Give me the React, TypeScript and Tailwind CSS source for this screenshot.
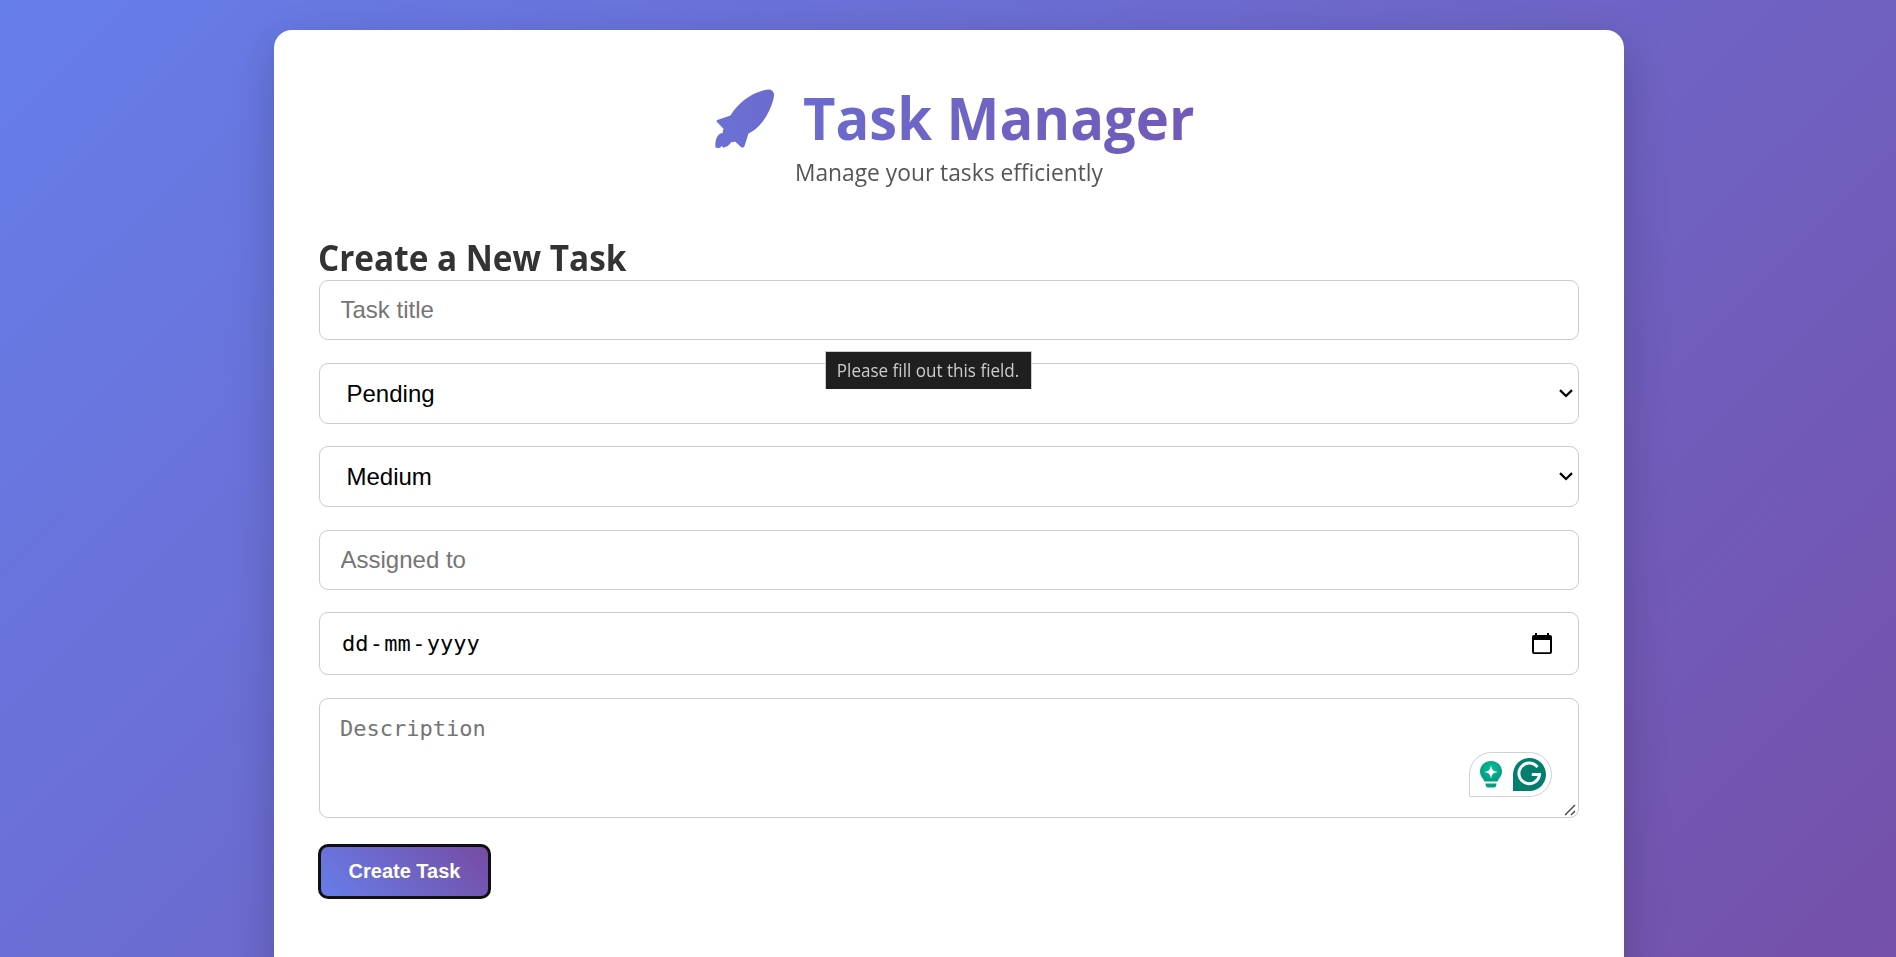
import React from "react";

const field =
  "block h-[60px] w-full rounded-[9px] border border-[#ccc] bg-white px-[20.5px] text-2xl font-['Liberation_Sans',Arial,sans-serif] outline-none placeholder:text-[#757575]";

function Chevron() {
  return (
    <svg width="14" height="9" viewBox="0 0 14 9" fill="none" stroke="#000" strokeWidth="2.3" className="mr-[5px] mb-px">
      <path d="M1 1.2 L7 7 L13 1.2" />
    </svg>
  );
}

function SelectField({ value }: { value: string }) {
  return (
    <div className="flex h-[61px] items-center justify-between rounded-[9px] border border-[#ccc] bg-white pl-[26.5px] font-['Liberation_Sans',Arial,sans-serif] text-2xl text-black">
      <span>{value}</span>
      <Chevron />
    </div>
  );
}

function Rocket() {
  return (
    <svg width="60" height="60" viewBox="0 0 60 60" className="mt-[11px] mr-[28px] shrink-0">
      <defs>
        <linearGradient id="rk" x1="0" y1="0" x2="1" y2="0">
          <stop offset="0" stopColor="#6b70d6" />
          <stop offset="1" stopColor="#6c6bce" />
        </linearGradient>
      </defs>
      <path
        fill="url(#rk)"
        d="M54 0.5 C58 0.3 60.500 3 60 7 C58.500 16 54 26 47.500 34 C43.500 39 38.500 42.500 34.500 44.500 L30.500 57 C29.700 58.700 28 59 27 58 L21 52.500 L19 53.300 L17.500 52.700 C15.500 56 12.500 58.500 8.700 58.500 L8.300 57.200 L7 57.300 L6.500 58.700 L3.500 59 L1.500 58.500 C0.800 53 2 48 5 45.500 C6.500 44.200 8 44 9.200 44 L8.500 42.500 L9.700 40 L3 33 C2.200 32 2.600 31.300 4 30.800 L16.500 26.500 C22.500 16 37 2.500 54 0.500 Z"
      />
    </svg>
  );
}

function Assistant() {
  return (
    <div className="absolute right-[26px] bottom-[20px] flex h-[45px] w-[83px] items-center justify-between rounded-r-full rounded-tl-full rounded-bl-none border border-[#ccd0e0] bg-white pr-[5px] pl-[9px]">
      <svg width="24" height="30" viewBox="0 0 24 30">
        <defs>
          <radialGradient id="bulb" cx="0.5" cy="0.4" r="0.6">
            <stop offset="0" stopColor="#00c29a" />
            <stop offset="1" stopColor="#069a80" />
          </radialGradient>
        </defs>
        <path fill="url(#bulb)" d="M12 1 C18 1 23 5.500 23 11.500 C23 16 20 18 18.500 21.500 H5.500 C4 18 1 16 1 11.500 C1 5.500 6 1 12 1 Z" />
        <path fill="#fff" d="M12 5.500 C13 10 14 11 18.500 12 C14 13 13 14 12 18.500 C11 14 10 13 5.500 12 C10 11 11 10 12 5.500 Z" />
        <path fill="#069a80" d="M6.500 23.500 H17.500 C17.500 26 16.500 27.500 15 27.500 H9 C7.500 27.500 6.500 26 6.500 23.500 Z" />
      </svg>
      <svg width="33" height="33" viewBox="0 0 33 33">
        <path fill="#027e6f" d="M16.500 0 A16.500 16.500 0 0 1 16.500 33 H0 V16.500 A16.500 16.500 0 0 1 16.500 0 Z" />
        <path fill="none" stroke="#fff" strokeWidth="3" d="M24.500 9.200 A10.300 10.300 0 1 0 26.500 16.500 H18.800" />
      </svg>
    </div>
  );
}

export default function App() {
  return (
    <div className="h-[957px] overflow-hidden">
      <div className="h-[1290px] bg-[linear-gradient(135deg,#667eea_0%,#764ba2_100%)] pt-[30px] font-['Open_Sans',sans-serif]">
        <main className="mx-auto h-[1600px] w-[1350px] translate-x-px rounded-[18px] bg-white px-[45px] pt-[45px] shadow-[0_15px_45px_rgba(0,0,0,0.2)]">
          <header className="flex h-[160px] flex-col">
            <div className="flex h-[84px] items-start pl-[395px]">
              <div className="pt-[3px]">
                <Rocket />
              </div>
              <h1 className="ml-px origin-left scale-x-[0.954] bg-linear-to-r from-[#6c6bce] to-[#715ab7] bg-clip-text text-[58.8px] leading-[85px] font-bold whitespace-nowrap text-transparent">
                Task Manager
              </h1>
            </div>
            <p className="-mt-[3px] scale-x-[0.969] text-center text-[23.5px] leading-8 text-[#555]">
              Manage your tasks efficiently
            </p>
          </header>

          <section className="relative">
            <h2 className="-ml-px h-[45px] origin-left scale-x-[0.944] text-[35.3px] leading-[45px] font-bold text-[#333]">
              Create a New Task
            </h2>
            <form className="flex flex-col">
              <input className={field} placeholder="Task title" />
              <div className="mt-[23px]">
                <SelectField value="Pending" />
              </div>
              <div className="mt-[22px]">
                <SelectField value="Medium" />
              </div>
              <div className="mt-[23px]">
                <input className={field} placeholder="Assigned to" />
              </div>
              <div className="mt-[22px] flex h-[63px] items-center justify-between rounded-[9px] border border-[#ccc] pr-[26px] pl-[22px] text-black">
                <span className="font-['DejaVu_Sans_Mono',monospace] text-[22px]">
                  dd<span className="mx-[1.3px]">-</span>mm<span className="mx-[1.3px]">-</span>yyyy
                </span>
                <svg width="20" height="22" viewBox="0 0 20 22">
                  <path
                    fill="#000"
                    fillRule="evenodd"
                    d="M3 0 H5 V2 H15 V0 H17 V2 H18 A2 2 0 0 1 20 4 V19 A2 2 0 0 1 18 21 H2 A2 2 0 0 1 0 19 V4 A2 2 0 0 1 2 2 H3 Z M2 7 V19.300 H18 V7 Z"
                  />
                </svg>
              </div>
              <div className="relative mt-[23px] h-[120px] rounded-[9px] border border-[#ccc] px-[20px] pt-[16px]">
                <span className="block font-['DejaVu_Sans_Mono',monospace] text-[22px] leading-7 text-[#757575]">
                  Description
                </span>
                <Assistant />
                <svg
                  width="12"
                  height="12"
                  viewBox="0 0 12 12"
                  className="absolute right-[2px] bottom-px"
                  stroke="#444"
                  strokeWidth="1.4"
                >
                  <path d="M1 11 L11 1 M7 11 L11 7" />
                </svg>
              </div>
              <button
                type="button"
                className="mt-[28px] mb-px ml-px h-[51px] w-[169px] self-start rounded-[8px] bg-[linear-gradient(45deg,#667eea,#764ba2)] pb-px font-['Liberation_Sans',Arial,sans-serif] text-xl font-bold text-white outline-[3px] outline-offset-[-1px] outline-[#101010]"
              >
                Create Task
              </button>
            </form>
            <div className="absolute top-[116px] left-[506px] flex h-[38px] w-[207px] items-center justify-center border border-b-0 border-[#ccc] bg-[#1f1f1f] text-[17.6px] whitespace-nowrap text-[#ccc]">
              <span className="scale-x-[0.97]">Please fill out this field.</span>
            </div>
          </section>
          <h2 className="mt-[49px] origin-left scale-x-[0.887] text-[35.3px] leading-[46px] font-bold text-[#333]">
            Tasks
          </h2>
        </main>
      </div>
    </div>
  );
}
